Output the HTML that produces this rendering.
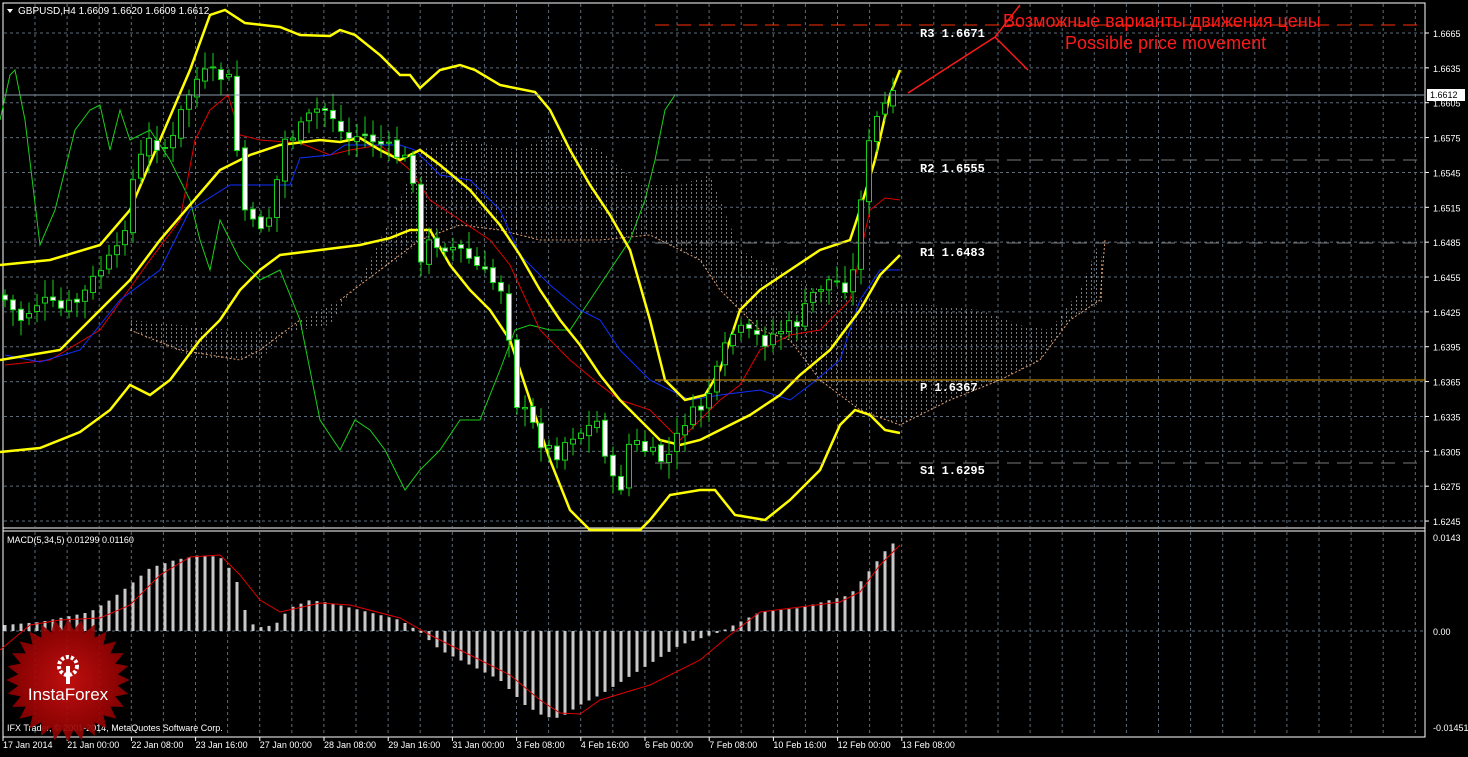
<!DOCTYPE html>
<html><head><meta charset="utf-8"><style>
body{margin:0;background:#000;width:1468px;height:752px;overflow:hidden;font-family:"Liberation Sans",sans-serif}
svg text{font-family:"Liberation Sans","DejaVu Sans",sans-serif}
svg text.m{font-family:"Liberation Mono","DejaVu Sans Mono",monospace}
</style></head><body>
<svg id="s" width="1468" height="752" xmlns="http://www.w3.org/2000/svg">
<defs>
<pattern id="hatch" width="5" height="4" patternUnits="userSpaceOnUse"><rect x="1" y="0" width="1" height="2" fill="#ccc"/></pattern>
<radialGradient id="lg" cx="50%" cy="50%" r="50%"><stop offset="0" stop-color="#d01010"/><stop offset="1" stop-color="#8a0000"/></radialGradient>
</defs>
<rect x="3" y="3" width="1422" height="734" fill="#000" stroke="#fff" stroke-width="1"/>
<line x1="3" y1="528" x2="1425" y2="528" stroke="#fff"/>
<line x1="3" y1="531" x2="1425" y2="531" stroke="#fff"/>
<g id="grid" stroke="#5c6b7a" stroke-dasharray="3,3" stroke-width="1"></g>
<g id="cloud"></g>
<g id="lines" fill="none"></g>
<g id="candles"></g>
<g id="macd"></g>
<line x1="655" y1="25" x2="1425" y2="25" stroke="#ff3000" stroke-dasharray="14,8"/>
<line x1="655" y1="160" x2="1425" y2="160" stroke="#777" stroke-dasharray="14,8"/>
<line x1="655" y1="243" x2="1425" y2="243" stroke="#777" stroke-dasharray="14,8"/>
<line x1="655" y1="380" x2="1425" y2="380" stroke="#e0a000"/>
<line x1="655" y1="463" x2="1425" y2="463" stroke="#777" stroke-dasharray="14,8"/>
<line x1="3" y1="95" x2="1425" y2="95" stroke="#8898a8"/>
<g fill="#fff" font-size="12" font-weight="bold">
<text class="m" x="920" y="37">R3 1.6671</text>
<text class="m" x="920" y="172">R2 1.6555</text>
<text class="m" x="920" y="256">R1 1.6483</text>
<text class="m" x="920" y="391"> P 1.6367</text>
<text class="m" x="920" y="474">S1 1.6295</text>
</g>
<g stroke="#ff1a1a" stroke-width="1.5"><line x1="908" y1="93" x2="995" y2="37"/><line x1="995" y1="37" x2="1020" y2="5"/><line x1="995" y1="37" x2="1028" y2="70"/></g>
<text x="1003" y="27" fill="#ff1a1a" font-size="18">Возможные варианты движения цены</text>
<text x="1065" y="49" fill="#ff1a1a" font-size="18">Possible price movement</text>
<polygon points="7,9 13,9 10,13" fill="#fff"/>
<text x="18" y="14" fill="#fff" font-size="10">GBPUSD,H4  1.6609 1.6620 1.6609 1.6612</text>
<text x="7" y="543" fill="#fff" font-size="9">MACD(5,34,5) 0.01299 0.01160</text>
<text x="7" y="731" fill="#fff" font-size="9">IFX Trader, © 2001-2014, MetaQuotes Software Corp.</text>
<g id="axis" fill="#fff" font-size="9"></g>
<rect x="1427" y="89" width="38" height="12" fill="#fff"/>
<text x="1430" y="98" fill="#000" font-size="9">1.6612</text>
<g transform="translate(68,680)">
<polygon id="star" fill="url(#lg)" opacity="0.92"/>
<circle cx="0" cy="-14" r="9" fill="none" stroke="#fff" stroke-width="4" stroke-dasharray="3,2"/>
<rect x="-2" y="-14" width="4" height="18" fill="#fff"/>
<text x="0" y="20" fill="#fff" font-size="17" text-anchor="middle">InstaForex</text>
</g>
</svg>
<script>
const NS="http://www.w3.org/2000/svg";
function el(p,t,a){const e=document.createElementNS(NS,t);for(const k in a)e.setAttribute(k,a[k]);document.getElementById(p).appendChild(e);return e}
for(let x=35;x<1425;x+=32.1)el("grid","line",{x1:x,y1:4,x2:x,y2:527});
for(let x=35;x<1425;x+=32.1)el("grid","line",{x1:x,y1:532,x2:x,y2:736});
for(let i=0;i<15;i++){let y=33+i*34.86;el("grid","line",{x1:4,y1:y,x2:1424,y2:y});
 let t=el("axis","text",{x:1433,y:y+4});t.textContent=(1.6665-i*0.003).toFixed(4);
 el("axis","line",{x1:1425,y1:y,x2:1429,y2:y,stroke:"#fff"});}
el("grid","line",{x1:4,y1:631,x2:1424,y2:631});
[[537,"0.0143"],[631,"0.00"],[727,"-0.01451"]].forEach(a=>{let t=el("axis","text",{x:1433,y:a[0]+4});t.textContent=a[1]});
["17 Jan 2014","21 Jan 00:00","22 Jan 08:00","23 Jan 16:00","27 Jan 00:00","28 Jan 08:00","29 Jan 16:00","31 Jan 00:00","3 Feb 08:00","4 Feb 16:00","6 Feb 00:00","7 Feb 08:00","10 Feb 16:00","12 Feb 00:00","13 Feb 08:00"].forEach((s,i)=>{let x=3+i*64.2;let t=el("axis","text",{x:x,y:748});t.textContent=s;el("axis","line",{x1:x,y1:737,x2:x,y2:741,stroke:"#fff"})});
function pl(pts,c,w,dash){el("lines","polyline",{points:pts.map(p=>p.join(",")).join(" "),stroke:c,"stroke-width":w||1,"stroke-dasharray":dash||"none",fill:"none"})}
function interp(pts,x){for(let i=1;i<pts.length;i++){if(x<=pts[i][0]){let a=pts[i-1],b=pts[i];return a[1]+(b[1]-a[1])*(x-a[0])/(b[0]-a[0])}}return pts[pts.length-1][1]}
el("cloud","path",{d:"M130,320 L180,325 L230,330 L270,330 L300,330 L330,325 L360,280 L400,200 L420,150 L460,140 L520,150 L550,135 L600,150 L640,185 L680,185 L710,175 L740,250 L780,270 L820,290 L870,300 L930,305 L980,310 L1020,325 L1050,330 L1080,290 L1100,240 L1105,300 L1070,320 L1040,360 L1000,380 L950,400 L900,425 L860,410 L820,380 L790,340 L760,330 L720,290 L700,260 L650,235 L600,240 L540,240 L500,230 L460,225 L420,240 L400,260 L380,270 L340,300 L300,320 L260,360 L200,360 L150,340 L130,330Z",fill:"url(#hatch)",opacity:"0.6"});
pl([[340,300],[380,270],[420,240],[460,225],[500,230],[540,240],[600,240],[650,235],[700,260],[720,290],[760,330],[790,340],[820,380],[860,410],[900,425],[950,400],[1000,380],[1040,360],[1070,320],[1100,300],[1105,240]],"#e0a070",1,"2,2");
pl([[130,330],[180,350],[240,360],[260,350],[300,320]],"#e0a070",1,"2,2");
pl([[0,120],[10,75],[15,70],[25,120],[40,245],[55,210],[75,130],[90,110],[100,105],[110,150],[120,110],[130,140],[150,130],[170,160],[190,200],[200,240],[210,270],[220,220],[240,260],[260,280],[280,270],[300,320],[320,420],[340,450],[355,420],[370,430],[385,450],[405,490],[420,470],[440,450],[460,420],[480,420],[500,370],[515,330],[530,325],[550,330],[570,330],[590,300],[610,270],[630,240],[645,200],[655,160],[665,110],[675,95],[690,95]],"#18d018");
pl([[5,365],[50,360],[100,330],[150,260],[180,220],[195,140],[210,110],[228,95],[240,135],[260,140],[300,143],[330,155],[350,150],[380,145],[410,170],[430,200],[460,220],[490,240],[510,265],[540,330],[570,360],[600,385],[620,400],[650,410],[680,440],[700,420],[720,400],[740,385],[760,350],[790,335],[820,330],[850,300],[870,210],[885,198],[900,200]],"#e00000");
pl([[5,355],[40,362],[80,350],[120,300],[160,270],[190,210],[230,185],[260,185],[290,185],[300,158],[330,155],[345,145],[400,145],[415,150],[440,175],[470,180],[500,210],[520,255],[550,285],[580,310],[600,320],[620,350],[650,380],[690,400],[720,395],[760,390],[790,400],[810,385],[840,360],[860,300],[880,270],[900,270]],"#1030ff");
const up=[[0,265],[50,260],[100,245],[130,210],[160,140],[190,70],[210,15],[225,10],[245,23],[280,27],[300,35],[330,36],[340,30],[355,35],[380,55],[400,75],[410,75],[420,88],[440,70],[460,65],[475,70],[500,85],[535,92],[550,110],[570,150],[590,185],[610,215],[630,250],[650,320],[665,380],[685,400],[705,395],[720,370],[740,310],[760,290],[790,270],[820,250],[850,240],[860,210],[875,160],[890,95],[900,70]];
const mid=[[0,360],[60,350],[100,310],[130,280],[160,240],[190,205],[220,170],[250,155],[280,145],[320,140],[340,142],[360,138],[380,150],[400,160],[420,150],[440,165],[470,190],[500,225],[520,255],[540,290],[560,320],[580,345],[600,375],[620,400],[640,420],[660,440],[680,445],[700,440],[720,430],[750,415],[780,395],[800,375],[830,350],[860,310],[880,275],[900,255]];
const lo=[[0,452],[40,448],[80,432],[110,410],[130,385],[150,395],[170,380],[200,340],[220,320],[240,290],[260,270],[280,255],[320,250],[360,245],[390,238],[410,230],[430,230],[450,265],[470,290],[490,310],[510,340],[530,400],[550,460],[570,510],[590,530],[640,530],[650,520],[670,495],[700,490],[715,490],[735,515],[765,520],[790,500],[820,470],[840,425],[855,410],[870,415],[885,430],[900,433]];
[up,mid,lo].forEach(p=>pl(p,"#ffff00",2.5));
const cl=[[5,300],[20,320],[40,300],[60,310],[80,300],[100,270],[120,250],[135,170],[150,140],[170,150],[185,100],[200,75],[215,75],[230,80],[237,150],[245,210],[255,230],[270,215],[285,140],[300,130],[315,110],[330,110],[345,140],[360,135],[375,140],[390,150],[405,160],[415,180],[420,270],[430,240],[445,245],[460,250],[475,265],[490,280],[505,290],[515,400],[530,420],[540,440],[555,455],[570,435],[585,430],[600,420],[610,480],[620,490],[630,440],[645,450],[660,460],[670,455],[685,420],[700,410],[715,380],[725,350],[735,330],[750,335],[765,340],[780,330],[795,325],[805,310],[815,290],[830,280],[845,285],[855,270],[860,200],[870,140],[880,110],[890,100],[900,95]];
let seed=7;function r(){seed=(seed*9301+49297)%233280;return seed/233280}
let prev=interp(cl,1);
for(let x=5;x<=900;x+=8){let c=interp(cl,x)+(r()-0.5)*16;let o=prev+(r()-0.5)*6;let top=Math.min(o,c),bot=Math.max(o,c);
 el("candles","line",{x1:x,y1:top-4-r()*14,x2:x,y2:bot+4+r()*14,stroke:"#18d018"});
 el("candles","rect",{x:x-2.5,y:top,width:5,height:Math.max(1,bot-top),fill:c<o?"#000":"#fff",stroke:"#18d018"});
 prev=c;}
const hi=[[5,625],[40,622],[90,612],[110,600],[130,585],[150,568],[175,560],[200,555],[220,557],[235,575],[245,610],[255,628],[275,625],[290,608],[310,600],[330,603],[360,610],[400,620],[420,632],[440,650],[470,665],[500,680],[525,705],[545,717],[560,718],[580,705],[600,695],[640,670],[680,645],[720,632],[740,622],[760,612],[800,608],[830,600],[850,595],[870,570],[890,545],[900,540]];
for(let x=5;x<=900;x+=8){let y=interp(hi,x);el("macd","rect",{x:x-1.5,y:Math.min(y,631),width:3,height:Math.abs(631-y),fill:"#c8c8c8"})}
el("macd","polyline",{points:[[0,650],[30,625],[60,620],[100,618],[130,605],[160,575],[190,557],[220,555],[240,575],[260,600],[280,612],[320,603],[350,605],[400,618],[430,635],[470,655],[510,675],[540,700],[560,713],[580,714],[600,700],[650,685],[700,660],[730,635],[760,612],[800,607],[840,602],[860,592],[880,565],[900,545]].join(" "),stroke:"#e00000",fill:"none"});
let pts=[];for(let i=0;i<56;i++){let a=i*Math.PI/28,R=i%2?50:62;pts.push((R*Math.cos(a)).toFixed(1)+","+(R*Math.sin(a)).toFixed(1))}
document.getElementById("star").setAttribute("points",pts.join(" "));
</script>
</body></html>
